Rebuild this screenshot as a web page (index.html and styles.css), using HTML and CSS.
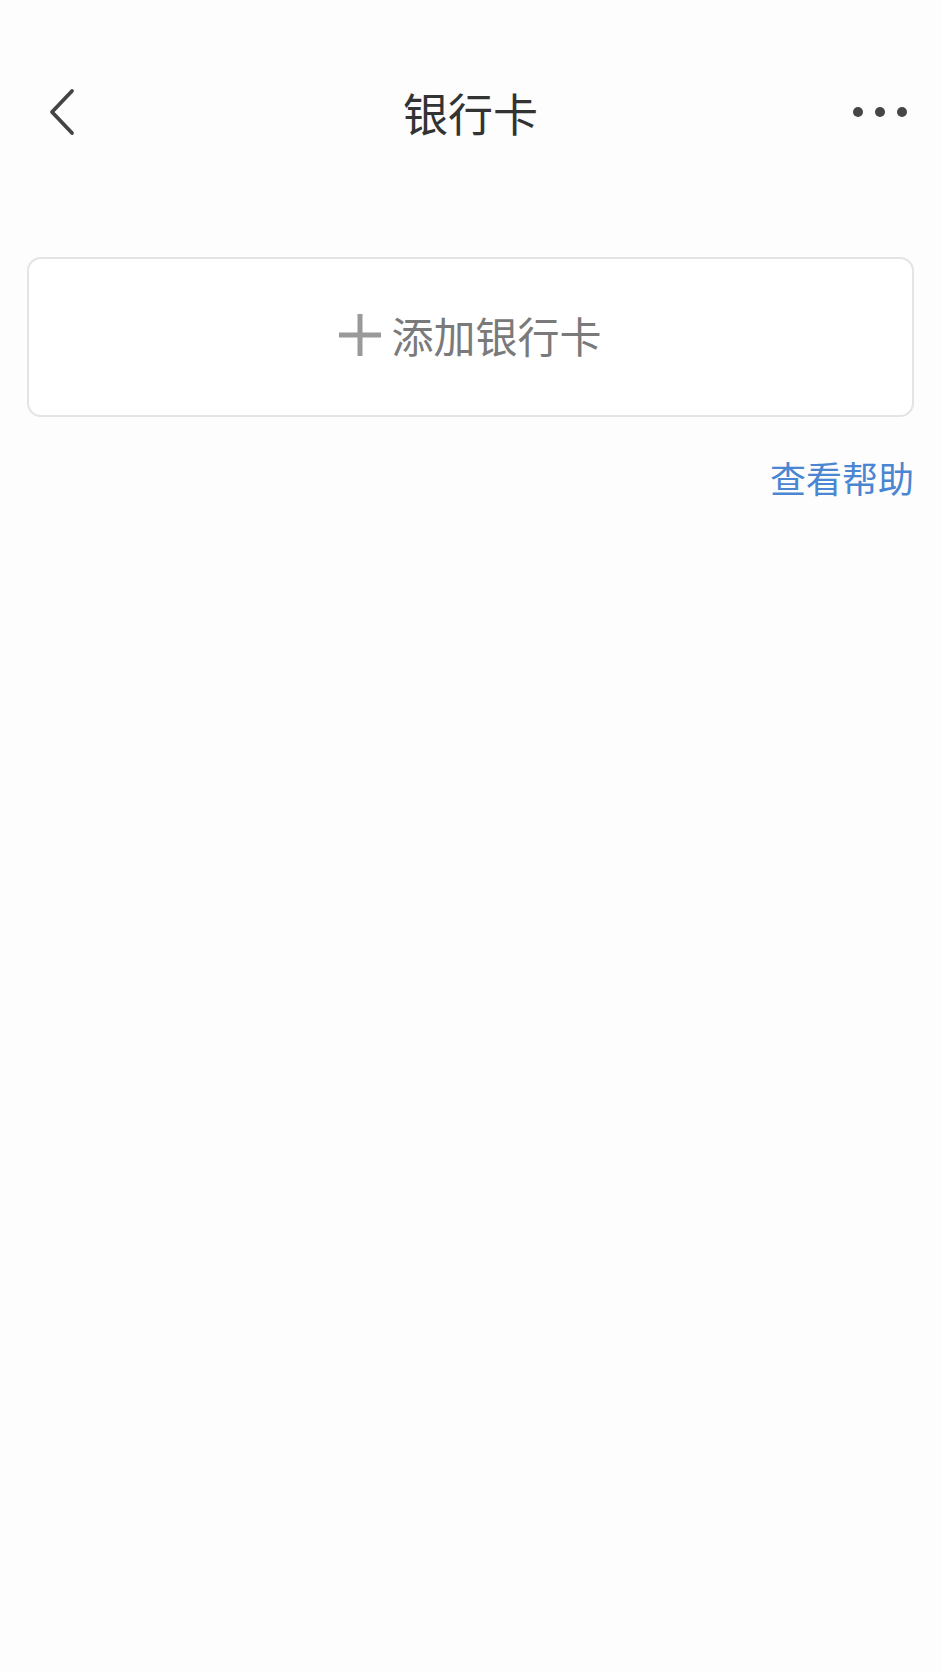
FILE: index.html
```html
<!DOCTYPE html>
<html lang="zh-CN">
<head>
    <meta charset="UTF-8">
    <meta name="viewport" content="width=device-width, initial-scale=1.0">
    <title>银行卡</title>
    <link rel="stylesheet" href="styles.css">
</head>
<body>

    <div class="nav-bar">
        <button class="nav-back" onclick="history.back()">
            <svg width="30" height="48" viewBox="0 0 30 48">
                <polyline points="24,3 4,24 24,45" fill="none" stroke="#444444" stroke-width="3.8" stroke-linecap="round" stroke-linejoin="round"/>
            </svg>
        </button>
        <h1 class="nav-title">银行卡</h1>
        <button class="nav-more">
            <span class="dot"></span>
            <span class="dot"></span>
            <span class="dot"></span>
        </button>
    </div>

    <div class="content">
        <button class="add-card" onclick="addCard()">
            <svg class="add-icon" width="42" height="42" viewBox="0 0 42 42">
                <line x1="21" y1="0" x2="21" y2="42" stroke="#9a9a9a" stroke-width="5"/>
                <line x1="0" y1="21" x2="42" y2="21" stroke="#9a9a9a" stroke-width="5"/>
            </svg>
            <span class="add-text">添加银行卡</span>
        </button>

        <div class="help-row">
            <a class="help-link" href="#">查看帮助</a>
        </div>
    </div>

    <script>
        function addCard() {
            var cardNo = prompt("请输入银行卡号:");
            if (cardNo) {
                alert("已提交: " + cardNo);
            }
        }
    </script>

</body>
</html>
```

FILE: styles.css
```css
body {
    margin: 0;
    background-color: #fdfdfd;
    font-family: "Noto Sans CJK SC", "Noto Sans", sans-serif;
    color: #333333;
}

button {
    font-family: inherit;
    background: none;
    border: none;
    padding: 0;
    cursor: pointer;
}

/* three columns so the title stays centred on the page */
.nav-bar {
    display: grid;
    grid-template-columns: 1fr auto 1fr;
    align-items: center;
    height: 104px;
    margin-top: 60px;
    padding: 0 40px;
}

.nav-back {
    display: flex;
    justify-self: start;
    margin-left: 8px;
}

.nav-title {
    margin: 0;
    font-size: 45px;
    font-weight: 400;
    color: #333333;
    line-height: 1;
}

.nav-more {
    display: flex;
    gap: 12px;
    justify-self: end;
    margin-right: -6px;
}

.dot {
    width: 10px;
    height: 10px;
    border-radius: 50%;
    background-color: #464646;
}

.content {
    padding: 0 27px;
}

.add-card {
    display: flex;
    align-items: center;
    justify-content: center;
    gap: 10px;
    width: 100%;
    height: 160px;
    margin-top: 93px;
    padding-bottom: 4px;
    background-color: #ffffff;
    border: 2px solid #e4e4e4;
    border-radius: 14px;
}

.add-text {
    font-size: 42px;
    color: #7a7a7a;
    line-height: 1;
}

.help-row {
    display: flex;
    justify-content: flex-end;
    margin-top: 38px;
}

.help-link {
    font-size: 36px;
    line-height: 44px;
    color: #4a86d2;
    text-decoration: none;
}
```
